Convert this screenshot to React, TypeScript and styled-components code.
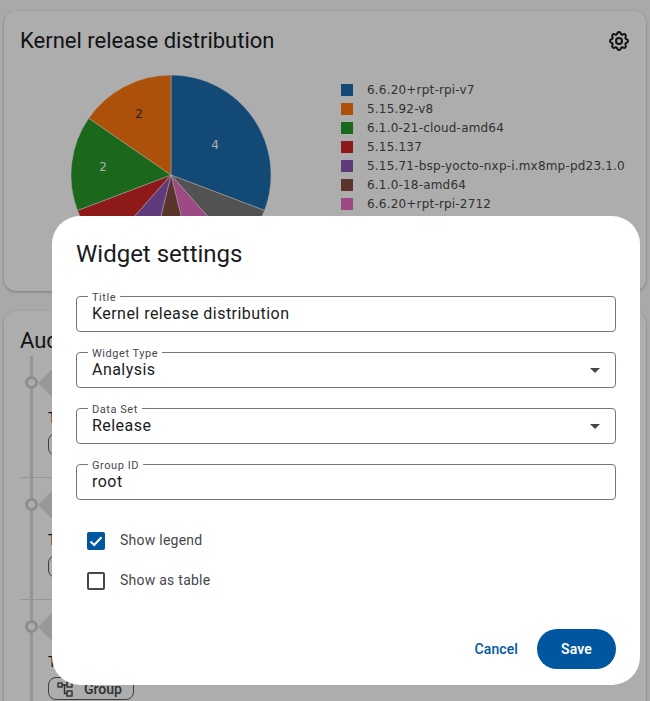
import React from 'react'
import styled, { createGlobalStyle } from 'styled-components'
import { TbSettings } from 'react-icons/tb'

const GlobalStyle = createGlobalStyle`
  html, body {
    margin: 0;
    padding: 0;
    height: 701px;
    overflow: hidden;
    background: #fafafa;
    font-family: Roboto, "Liberation Sans", sans-serif;
  }
  * {
    box-sizing: border-box;
  }
`

const Page = styled.div`
  display: flex;
  flex-direction: column;
  gap: 20px;
  padding: 11px 4px 0;
  height: 701px;
  overflow: hidden;
`

const Card = styled.section<{ $height?: number }>`
  flex-shrink: 0;
  background: #ffffff;
  border-radius: 12px;
  box-shadow: 0 1px 3px rgba(0, 0, 0, 0.3);
  padding: 16px;
  height: ${(p) => (p.$height ? `${p.$height}px` : 'auto')};
`

const CardHeader = styled.header`
  display: flex;
  align-items: center;
  justify-content: space-between;
  height: 26px;
`

const CardTitle = styled.h2`
  margin: 0;
  font-size: 22px;
  font-weight: 400;
  color: #1a1c1e;
  white-space: nowrap;
`

const GearButton = styled.span`
  display: flex;
  margin: 2px -1px 0 0;
  color: #1a1c1e;
  font-size: 24px;
`

const ChartRow = styled.div`
  display: flex;
  margin-top: 22px;
  padding-left: 51px;
`

const PieSvg = styled.svg`
  flex-shrink: 0;
  width: 200px;
  height: 200px;
`

const PieLabel = styled.text<{ $dark?: boolean }>`
  font-family: "DejaVu Sans", sans-serif;
  font-size: 12px;
  text-anchor: middle;
  dominant-baseline: central;
  fill: ${(p) => (p.$dark ? '#333333' : '#ffffff')};
`

const Legend = styled.ul`
  list-style: none;
  margin: 0;
  padding: 0 0 0 70px;
  display: flex;
  flex-direction: column;
  padding-top: 5px;
`

const LegendRow = styled.li`
  display: flex;
  align-items: center;
  gap: 14px;
  height: 19px;
  font-family: "DejaVu Sans", sans-serif;
  font-size: 12px;
  letter-spacing: 0.19px;
  color: #4a4a4a;
  white-space: nowrap;
`

const Swatch = styled.span<{ $color: string }>`
  width: 12px;
  height: 12px;
  background: ${(p) => p.$color};
`

const Timeline = styled.div`
  margin-top: 3px;
`

const TimelineRow = styled.div`
  display: flex;
  height: 122px;
  border-bottom: 1px solid #dddddd;
  background: linear-gradient(#dcdcdc, #dcdcdc) 10px 0 / 3px 100% no-repeat;
`

const RailCell = styled.div`
  flex-shrink: 0;
  width: 28px;
  padding: 20px 0 0 5px;
`

const RailDot = styled.span`
  display: block;
  width: 13px;
  height: 13px;
  border-radius: 50%;
  border: 3px solid #d0d0d0;
  background: #ffffff;
`

const RowBody = styled.div`
  flex: 1;
  min-width: 0;
`

const Bubble = styled.div`
  display: flex;
  height: 28px;
  margin-top: 13px;
  margin-left: -10px;
`

const BubbleTip = styled.span`
  width: 14px;
  height: 28px;
  background: #e0e0e0;
  clip-path: polygon(0 50%, 100% 0, 100% 100%);
`

const BubbleBody = styled.span`
  flex: 1;
  background: #e0e0e0;
`

const RowTitle = styled.div`
  margin-top: 10px;
  height: 26px;
  font-size: 14px;
  line-height: 22px;
  color: #1a1c1e;
`

const Chip = styled.span`
  display: inline-flex;
  align-items: center;
  gap: 11px;
  height: 23px;
  width: 86px;
  padding-left: 8px;
  border: 1px solid #5a5d63;
  border-radius: 8px;
  font-size: 14px;
  font-weight: 500;
  color: #44474e;
`

const Scrim = styled.div`
  position: fixed;
  inset: 0;
  background: rgba(0, 0, 0, 0.32);
`

const Dialog = styled.div`
  position: fixed;
  left: 52px;
  top: 216px;
  width: 588px;
  height: 469px;
  padding: 24px;
  background: #ffffff;
  border-radius: 28px;
  display: flex;
  flex-direction: column;
`

const DialogTitle = styled.h2`
  margin: 0 0 28px;
  font-size: 24px;
  line-height: 28px;
  font-weight: 400;
  color: #1a1c1e;
`

const Fields = styled.div`
  display: flex;
  flex-direction: column;
  gap: 20px;
`

const Field = styled.div`
  position: relative;
  display: flex;
  align-items: center;
  justify-content: space-between;
  height: 36px;
  padding: 0 15px;
  border: 1px solid #74777f;
  border-radius: 4px;
`

const FieldLabel = styled.label`
  position: absolute;
  left: 11px;
  top: -6px;
  padding: 0 4px;
  background: #ffffff;
  font-size: 11px;
  line-height: 13px;
  letter-spacing: 0.55px;
  color: #44474e;
`

const FieldValue = styled.span`
  margin-bottom: 2px;
  font-size: 16px;
  letter-spacing: 0.46px;
  color: #1a1c1e;
`

const Caret = styled.span`
  width: 0;
  height: 0;
  border-left: 5px solid transparent;
  border-right: 5px solid transparent;
  border-top: 5px solid #44474e;
`

const Checks = styled.div`
  display: flex;
  flex-direction: column;
  gap: 22px;
  margin-top: 32px;
  padding-left: 11px;
`

const CheckRow = styled.div`
  display: flex;
  align-items: center;
  gap: 15px;
  height: 18px;
  font-size: 14px;
  letter-spacing: 0.25px;
  color: #44474e;
`

const CheckLabel = styled.span`
  margin-bottom: 2px;
`

const CheckBox = styled.span<{ $checked?: boolean }>`
  display: flex;
  align-items: center;
  justify-content: center;
  width: 18px;
  height: 18px;
  border-radius: 2px;
  border: ${(p) => (p.$checked ? 'none' : '2px solid #44474e')};
  background: ${(p) => (p.$checked ? '#00569f' : 'transparent')};
`

const Actions = styled.div`
  display: flex;
  align-items: center;
  justify-content: flex-end;
  gap: 19px;
  margin-top: auto;
  margin-bottom: -8px;
`

const TextButton = styled.button`
  border: none;
  background: none;
  padding: 0;
  font: 500 14px Roboto, sans-serif;
  letter-spacing: 0.1px;
  color: #00569f;
`

const SaveButton = styled.button`
  width: 79px;
  height: 40px;
  border: none;
  border-radius: 20px;
  background: #00569f;
  font: 600 14px Roboto, sans-serif;
  letter-spacing: 0.1px;
  color: #ffffff;
`

const slices = [
  { name: '6.6.20+rpt-rpi-v7', value: 4, color: '#1c6ead' },
  { name: '5.15.92-v8', value: 2, color: '#ff770f' },
  { name: '6.1.0-21-cloud-amd64', value: 2, color: '#289828' },
  { name: '5.15.137', value: 1, color: '#d22525' },
  { name: '5.15.71-bsp-yocto-nxp-i.mx8mp-pd23.1.0', value: 1, color: '#8c57b9' },
  { name: '6.1.0-18-amd64', value: 1, color: '#874e42' },
  { name: '6.6.20+rpt-rpi-2712', value: 1, color: '#e86dc3' },
  { name: '6.1.21-v8', value: 1, color: '#797979' },
]

// clockwise order on the pie differs from the legend order
const pieOrder = [0, 7, 6, 5, 4, 3, 2, 1]

const slicePath = (from: number, to: number) => {
  const point = (deg: number) => {
    const rad = (deg * Math.PI) / 180
    return `${100 + 100 * Math.sin(rad)} ${100 - 100 * Math.cos(rad)}`
  }
  const large = to - from > 180 ? 1 : 0
  return `M100 100 L${point(from)} A100 100 0 ${large} 1 ${point(to)} Z`
}

const Pie = () => {
  const total = slices.reduce((sum, s) => sum + s.value, 0)
  let angle = 0
  return (
    <PieSvg viewBox="0 0 200 200">
      {pieOrder.map((i) => {
        const sweep = (slices[i].value / total) * 360
        const d = slicePath(angle, angle + sweep)
        angle += sweep
        return <path key={i} d={d} fill={slices[i].color} stroke="#ffffff" strokeWidth={0.5} />
      })}
      <PieLabel x={144} y={70}>4</PieLabel>
      <PieLabel x={68} y={39} $dark>2</PieLabel>
      <PieLabel x={32} y={92}>2</PieLabel>
    </PieSvg>
  )
}

const GroupIcon = () => (
  <svg width="16" height="16" viewBox="0 0 16 16" fill="none" stroke="currentColor" strokeWidth="1.4">
    <rect x="1" y="2" width="4" height="4" />
    <rect x="10" y="1" width="5" height="5" />
    <rect x="10" y="10" width="5" height="5" />
    <path d="M5 4h5M7.5 4v8.5H10" />
  </svg>
)

const AuditRow = () => (
  <TimelineRow>
    <RailCell>
      <RailDot />
    </RailCell>
    <RowBody>
      <Bubble>
        <BubbleTip />
        <BubbleBody />
      </Bubble>
      <RowTitle>Token created</RowTitle>
      <Chip>
        <GroupIcon />
        Group
      </Chip>
    </RowBody>
  </TimelineRow>
)

const App = () => (
  <>
    <GlobalStyle />
    <Page>
      <Card $height={280}>
        <CardHeader>
          <CardTitle>Kernel release distribution</CardTitle>
          <GearButton>
            <TbSettings />
          </GearButton>
        </CardHeader>
        <ChartRow>
          <Pie />
          <Legend>
            {slices.map((s) => (
              <LegendRow key={s.name}>
                <Swatch $color={s.color} />
                {s.name}
              </LegendRow>
            ))}
          </Legend>
        </ChartRow>
      </Card>
      <Card>
        <CardHeader>
          <CardTitle>Audit log</CardTitle>
        </CardHeader>
        <Timeline>
          <AuditRow />
          <AuditRow />
          <AuditRow />
        </Timeline>
      </Card>
    </Page>
    <Scrim />
    <Dialog>
      <DialogTitle>Widget settings</DialogTitle>
      <Fields>
        <Field>
          <FieldLabel>Title</FieldLabel>
          <FieldValue>Kernel release distribution</FieldValue>
        </Field>
        <Field>
          <FieldLabel>Widget Type</FieldLabel>
          <FieldValue>Analysis</FieldValue>
          <Caret />
        </Field>
        <Field>
          <FieldLabel>Data Set</FieldLabel>
          <FieldValue>Release</FieldValue>
          <Caret />
        </Field>
        <Field>
          <FieldLabel>Group ID</FieldLabel>
          <FieldValue>root</FieldValue>
        </Field>
      </Fields>
      <Checks>
        <CheckRow>
          <CheckBox $checked>
            <svg width="14" height="14" viewBox="0 0 14 14" fill="none" stroke="#ffffff" strokeWidth="2">
              <path d="M1.5 7.5 5.2 11 12.5 3.2" />
            </svg>
          </CheckBox>
          <CheckLabel>Show legend</CheckLabel>
        </CheckRow>
        <CheckRow>
          <CheckBox />
          <CheckLabel>Show as table</CheckLabel>
        </CheckRow>
      </Checks>
      <Actions>
        <TextButton>Cancel</TextButton>
        <SaveButton>Save</SaveButton>
      </Actions>
    </Dialog>
  </>
)

export default App
